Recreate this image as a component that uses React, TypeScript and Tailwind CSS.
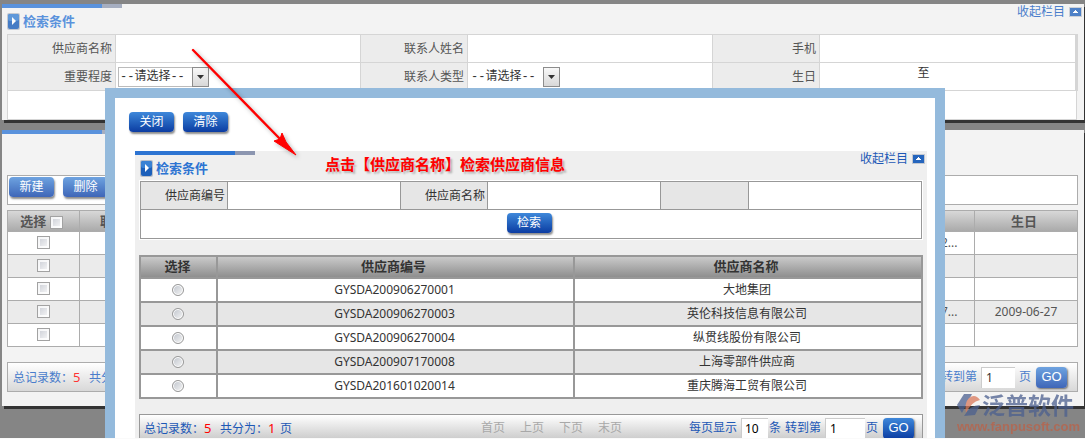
import type { ReactNode } from 'react'
import clsx from 'clsx'

const suppliers = [
  { code: 'GYSDA200906270001', name: '大地集团' },
  { code: 'GYSDA200906270003', name: '英伦科技信息有限公司' },
  { code: 'GYSDA200906270004', name: '纵贯线股份有限公司' },
  { code: 'GYSDA200907170008', name: '上海零部件供应商' },
  { code: 'GYSDA201601020014', name: '重庆腾海工贸有限公司' },
]

const contacts = [
  { phone: '2...', birthday: '' },
  { phone: '', birthday: '' },
  { phone: '', birthday: '' },
  { phone: '7...', birthday: '2009-06-27' },
  { phone: '', birthday: '' },
]

// `dim` is the paler look of everything behind the dialog
function ActionButton({ children, dim = false }: { children: ReactNode; dim?: boolean }) {
  return (
    <button
      type="button"
      className={clsx(
        'h-5 w-[45px] shrink-0 rounded text-xs leading-5 text-white shadow-[1px_2px_2px_rgba(0,0,0,0.45)]',
        dim
          ? 'bg-linear-to-b from-[#6ea3e0] to-[#3f66b8]'
          : 'bg-linear-to-b from-[#3f88da] to-[#0d3ca2]',
      )}
    >
      {children}
    </button>
  )
}

function GoButton({ dim = false }: { dim?: boolean }) {
  return (
    <button
      type="button"
      className={clsx(
        "h-[21px] w-[31px] shrink-0 rounded font-['Liberation_Sans',sans-serif] text-[13px] leading-5 text-white shadow-[1px_1px_2px_rgba(0,0,0,0.5)]",
        dim
          ? 'bg-linear-to-b from-[#6ea3e0] to-[#3f66b8]'
          : 'bg-linear-to-b from-[#3f88da] to-[#0d3ca2]',
      )}
    >
      GO
    </button>
  )
}

function TopStripe({ dim = false }: { dim?: boolean }) {
  return (
    <div className="flex h-1">
      <div className={clsx('w-[100px]', dim ? 'bg-[#5a92dc]' : 'bg-[#2d74d2]')} />
      <div className={clsx('w-5', dim ? 'bg-[#a6aec0]' : 'bg-[#8c96b0]')} />
    </div>
  )
}

function SectionHeader({ dim = false }: { dim?: boolean }) {
  return (
    <div className="flex h-[26px] items-start justify-between">
      <h2
        className={clsx(
          'flex items-center gap-[3px] pt-1 pl-[5px] text-[13px] leading-[18px] font-bold',
          dim ? 'text-[#5a92dc]' : 'text-[#2d74d2]',
        )}
      >
        <svg width="13" height="17" viewBox="0 0 13 17" className={dim ? 'opacity-80' : ''}>
          <rect width="13" height="17" rx="2" fill="#b9bfc9" />
          <rect x="1" y="1" width="11" height="15" rx="2" fill="#1b5fba" />
          <rect x="1" y="1" width="11" height="7" rx="2" fill="#3a82d4" />
          <path d="M5 4l4 4-4 4z" fill="#fff" />
        </svg>
        检索条件
      </h2>
      <a
        href="#"
        className={clsx(
          '-mt-1 flex items-center gap-1 pr-0.5 text-xs leading-4',
          dim ? 'text-[#4a7dcb]' : 'text-[#1d58b6]',
        )}
      >
        收起栏目
        <svg width="13" height="10" viewBox="0 0 13 10" className={dim ? 'opacity-80' : ''}>
          <rect width="13" height="10" fill="#c3c8d0" />
          <rect x="1" y="1" width="11" height="8" fill="#2565bd" />
          <path d="M6 3h1v1h1v1h1v1H4V5h1V4h1z" fill="#fff" />
        </svg>
      </a>
    </div>
  )
}

function PlainSelect({ id, framed = false }: { id: string; framed?: boolean }) {
  return (
    <span className={clsx('relative inline-flex h-5 align-middle', framed ? 'w-[91px]' : 'w-[90px]')}>
      <select
        id={id}
        className={clsx(
          "w-full appearance-none bg-white pl-px font-['Liberation_Mono','Noto_Sans_CJK_SC',monospace] text-xs leading-4 text-[#333]",
          framed && 'border border-[#bbb]',
        )}
      >
        <option>--请选择--</option>
      </select>
      <span className="pointer-events-none absolute inset-y-0 right-0 flex w-[17px] items-center justify-center border border-[#8c8c8c] bg-linear-to-b from-[#f8f8f8] to-[#d8d8d8]">
        <svg width="7" height="4" viewBox="0 0 7 4">
          <path d="M0 0h7L3.5 4z" fill="#333" />
        </svg>
      </span>
    </span>
  )
}

function CheckBox({ label }: { label: string }) {
  return (
    <input
      type="checkbox"
      aria-label={label}
      className="size-[13px] appearance-none border border-[#a2a2a2] bg-linear-to-br from-[#c9ccd4] to-[#fafafa] align-middle ring-2 ring-white/80 ring-inset"
    />
  )
}

function SearchPanel() {
  const label = 'border border-[#d5d5d5] bg-[#ececec] pr-[3px] text-right text-[#555]'
  const field = 'border border-[#d5d5d5] bg-white'
  return (
    <section className="bg-[#f3f3f3] shadow-[2px_3px_0_#333]">
      <TopStripe dim />
      <SectionHeader dim />
      <div className="mr-1.5 ml-[5px]">
        <table className="w-full table-fixed border-collapse text-xs leading-4">
          <colgroup>
            <col className="w-[108px]" />
            <col className="w-[245px]" />
            <col className="w-[107px]" />
            <col className="w-[245px]" />
            <col className="w-[107px]" />
            <col />
          </colgroup>
          <tbody>
            <tr className="h-7">
              <td className={label}>供应商名称</td>
              <td className={field} />
              <td className={label}>联系人姓名</td>
              <td className={field} />
              <td className={label}>手机</td>
              <td className={clsx(field, 'border-r-[3px]')} />
            </tr>
            <tr className="h-7">
              <td className={label}>
                <label htmlFor="level">重要程度</label>
              </td>
              <td className={clsx(field, 'pl-0.5')}>
                <PlainSelect id="level" framed />
              </td>
              <td className={label}>
                <label htmlFor="kind">联系人类型</label>
              </td>
              <td className={clsx(field, 'pl-0.5')}>
                <PlainSelect id="kind" />
              </td>
              <td className={label}>生日</td>
              <td className={clsx(field, 'border-r-[3px] pr-12 pb-2 text-center text-[#333]')}>至</td>
            </tr>
            <tr className="h-[29px]">
              <td colSpan={6} className={field} />
            </tr>
          </tbody>
        </table>
      </div>
    </section>
  )
}

function ContactPanel() {
  const head = 'border border-[#acacac] p-0'
  const cell = 'border border-[#acacac] p-0'
  return (
    <section className="mt-2.5 bg-[#f3f3f3] pb-3.5 shadow-[2px_3px_0_#333]">
      <TopStripe dim />
      <div className="mr-1.5 ml-[5px] pt-[41px]">
        <div className="flex h-[30px] items-start gap-[9px] border border-[#acacac] bg-white pt-px pl-px">
          <ActionButton dim>新建</ActionButton>
          <ActionButton dim>删除</ActionButton>
        </div>
        <table className="mt-[5px] w-full table-fixed border-collapse text-center text-xs leading-4 text-[#555]">
          <colgroup>
            <col className="w-[72px]" />
            <col />
            <col className="w-[40px]" />
            <col className="w-[103px]" />
          </colgroup>
          <thead>
            <tr className="h-[21px] bg-linear-to-b from-[#d8d8d8] to-[#a8a8a8] text-[13px]">
              <th className={clsx(head, 'pr-1')}>
                选择 <CheckBox label="全选" />
              </th>
              <th className={clsx(head, 'pl-5 text-left')}>联系人姓名</th>
              <th className={head} />
              <th className={clsx(head, 'pr-1')}>生日</th>
            </tr>
          </thead>
          <tbody>
            {contacts.map((contact, i) => (
              <tr key={i} className={clsx('h-[23px]', i % 2 ? 'bg-[#ebebeb]' : 'bg-white')}>
                <td className={clsx(cell, 'pb-0.5')}>
                  <CheckBox label={`选择第${i + 1}行`} />
                </td>
                <td className={cell} />
                <td className={clsx(cell, 'pl-1.5 text-left')}>{contact.phone}</td>
                <td className={cell}>{contact.birthday}</td>
              </tr>
            ))}
          </tbody>
        </table>
        <div className="mt-[15px] flex h-[30px] items-center justify-between border border-[#acacac] bg-linear-to-b from-white to-[#d8d8d8] pr-2.5 pl-[5px] text-xs text-[#4a7dcb]">
          <p className="flex items-baseline leading-4">
            总记录数：<span className="w-4 text-[13px] text-[#f33]">5</span>共分为：1 页
          </p>
          <div className="flex items-center gap-1">
            <label htmlFor="go-page">转到第</label>
            <input
              id="go-page"
              defaultValue="1"
              className="h-[21px] w-[34px] border-t border-l border-[#ccc] bg-white pl-1 text-[#333]"
            />
            <span className="mr-px">页</span>
            <GoButton dim />
          </div>
        </div>
      </div>
    </section>
  )
}

function SupplierDialog() {
  const label = 'border border-[#989898] bg-[#e6e6e6] pr-0.5 text-right'
  const field = 'border border-[#989898] bg-white p-0'
  const cell = 'border-2 border-[#989898] p-0'
  return (
    <div
      role="dialog"
      aria-label="供应商"
      className="absolute top-[88px] right-[140px] bottom-px left-[105px] overflow-hidden border-10 border-b-0 border-[#94badc] bg-white"
    >
      <div className="flex gap-[9px] pt-3.5 pl-3.5">
        <ActionButton>关闭</ActionButton>
        <ActionButton>清除</ActionButton>
      </div>
      <section className="mt-[19px] mr-2 ml-5 bg-[#efefef] pb-8">
        <TopStripe />
        <SectionHeader />
        <div className="mx-[5px] bg-white shadow-[0_0_0_1px_#fff]">
          <table className="w-full table-fixed border-collapse text-xs leading-4 text-[#333]">
            <colgroup>
              <col className="w-[87px]" />
              <col className="w-[173px]" />
              <col className="w-[87px]" />
              <col className="w-[173px]" />
              <col className="w-[88px]" />
              <col />
            </colgroup>
            <tbody>
              <tr className="h-7">
                <td className={label}>
                  <label htmlFor="supplier-code">供应商编号</label>
                </td>
                <td className={field}>
                  <input id="supplier-code" className="block h-5 w-full px-1 outline-none" />
                </td>
                <td className={label}>
                  <label htmlFor="supplier-name">供应商名称</label>
                </td>
                <td className={field}>
                  <input id="supplier-name" className="block h-5 w-full px-1 outline-none" />
                </td>
                <td className={label} />
                <td className={field} />
              </tr>
              <tr className="h-[29px]">
                <td colSpan={6} className={clsx(field, 'pr-1 pb-0.5 text-center')}>
                  <ActionButton>检索</ActionButton>
                </td>
              </tr>
            </tbody>
          </table>
        </div>

        <div className="mx-1 mt-4">
          <table className="w-full table-fixed border-collapse text-center text-xs leading-4 text-[#333]">
            <colgroup>
              <col className="w-[77px]" />
              <col className="w-[357px]" />
              <col />
            </colgroup>
            <thead>
              <tr className="h-[22px] bg-linear-to-b from-[#cdcdcd] to-[#8c8c8c] text-[13px]">
                <th className={clsx(cell, 'pr-0.5 pb-0.5')}>选择</th>
                <th className={clsx(cell, 'pr-1 pb-0.5')}>供应商编号</th>
                <th className={clsx(cell, 'pr-1 pb-0.5')}>供应商名称</th>
              </tr>
            </thead>
            <tbody>
              {suppliers.map((supplier, i) => (
                <tr key={supplier.code} className={clsx('h-6', i % 2 ? 'bg-[#e6e6e6]' : 'bg-white')}>
                  <td className={clsx(cell, 'pr-0.5 pb-0.5')}>
                    <input
                      type="radio"
                      name="supplier"
                      aria-label={supplier.name}
                      className="size-3 appearance-none rounded-full border border-[#999] bg-linear-to-br from-[#bfc4cc] to-[#f6f6f6] align-middle ring-1 ring-white ring-inset"
                    />
                  </td>
                  <td className={clsx(cell, 'pr-0.5')}>{supplier.code}</td>
                  <td className={clsx(cell, 'pr-0.5')}>{supplier.name}</td>
                </tr>
              ))}
            </tbody>
          </table>

          <div className="mt-[15px] flex h-7 items-center border border-[#989898] bg-linear-to-b from-white to-[#c8c8c8] pr-2 pl-1 text-xs text-[#1d58b6]">
            <p className="flex flex-1 items-baseline leading-4">
              总记录数：<span className="w-4 text-[13px] text-[#f00]">5</span>共分为：
              <span className="w-3 text-[13px] text-[#f00]">1</span>页
            </p>
            <nav className="mr-[67px] flex gap-[15px] text-[#a8a8a8]">
              <a href="#">首页</a>
              <a href="#">上页</a>
              <a href="#">下页</a>
              <a href="#">末页</a>
            </nav>
            <div className="flex items-center">
              <label htmlFor="page-size">每页显示</label>
              <input
                id="page-size"
                defaultValue="10"
                className="mr-px ml-1 h-5 w-[27px] border-t border-l border-[#ccc] bg-white pl-[3px] text-black"
              />
              <span className="mr-1">条</span>
              <label htmlFor="page-no">转到第</label>
              <input
                id="page-no"
                defaultValue="1"
                className="mr-px ml-1 h-5 w-10 border-t border-l border-[#ccc] bg-white pl-1 text-black"
              />
              <span className="mr-[5px]">页</span>
              <GoButton />
            </div>
          </div>
        </div>
      </section>
    </div>
  )
}

function Callout() {
  return (
    <div className="pointer-events-none absolute top-[46px] left-[189px]">
      <svg width="112" height="114" viewBox="0 0 112 114" className="drop-shadow-[2px_2px_2px_rgba(0,0,0,0.3)]">
        <path d="M4 4L93 95" stroke="#f00" strokeWidth="2.4" strokeLinecap="round" />
        <path d="M107 109L85 95L91 93L93 87L97 96Z" fill="#f00" stroke="#f00" strokeWidth="1" />
      </svg>
      <p className="absolute top-[108px] left-[136px] text-[15px] leading-5 font-bold whitespace-nowrap text-[#f00] [text-shadow:2px_2px_2px_rgba(0,0,0,0.25)]">
        点击【供应商名称】检索供应商信息
      </p>
    </div>
  )
}

function Watermark() {
  return (
    <div className="pointer-events-none absolute right-2 bottom-1 w-[120px] opacity-75">
      <div className="flex items-center">
        <svg width="25" height="24" viewBox="0 0 25 24" className="shrink-0">
          <path d="M7 1H15L5 20L0 12Z" fill="#4c608f" />
          <path d="M9 20Q7 10 12 5Q18 0 23 7Q14 9 9 20Z" fill="#d9795b" />
          <path d="M7 23Q13 12 23 12L18 22Z" fill="#4c608f" />
        </svg>
        <span className="text-[23px] leading-6 font-bold whitespace-nowrap text-[#4c608f]">泛普软件</span>
      </div>
      <p className="pt-0.5 font-['Liberation_Sans',sans-serif] text-[13px] leading-4 font-bold text-[#bb6248]">
        www.fanpusoft.com
      </p>
    </div>
  )
}

export default function App() {
  return (
    <div className="relative min-h-screen overflow-hidden bg-[#858585] font-['Noto_Sans','Noto_Sans_CJK_SC',sans-serif]">
      <div className="pt-1 pr-px pl-0.5">
        <SearchPanel />
        <ContactPanel />
      </div>
      <Watermark />
      <SupplierDialog />
      <Callout />
      <div className="absolute inset-x-0 bottom-0 h-px bg-[#fafafa]" />
    </div>
  )
}
